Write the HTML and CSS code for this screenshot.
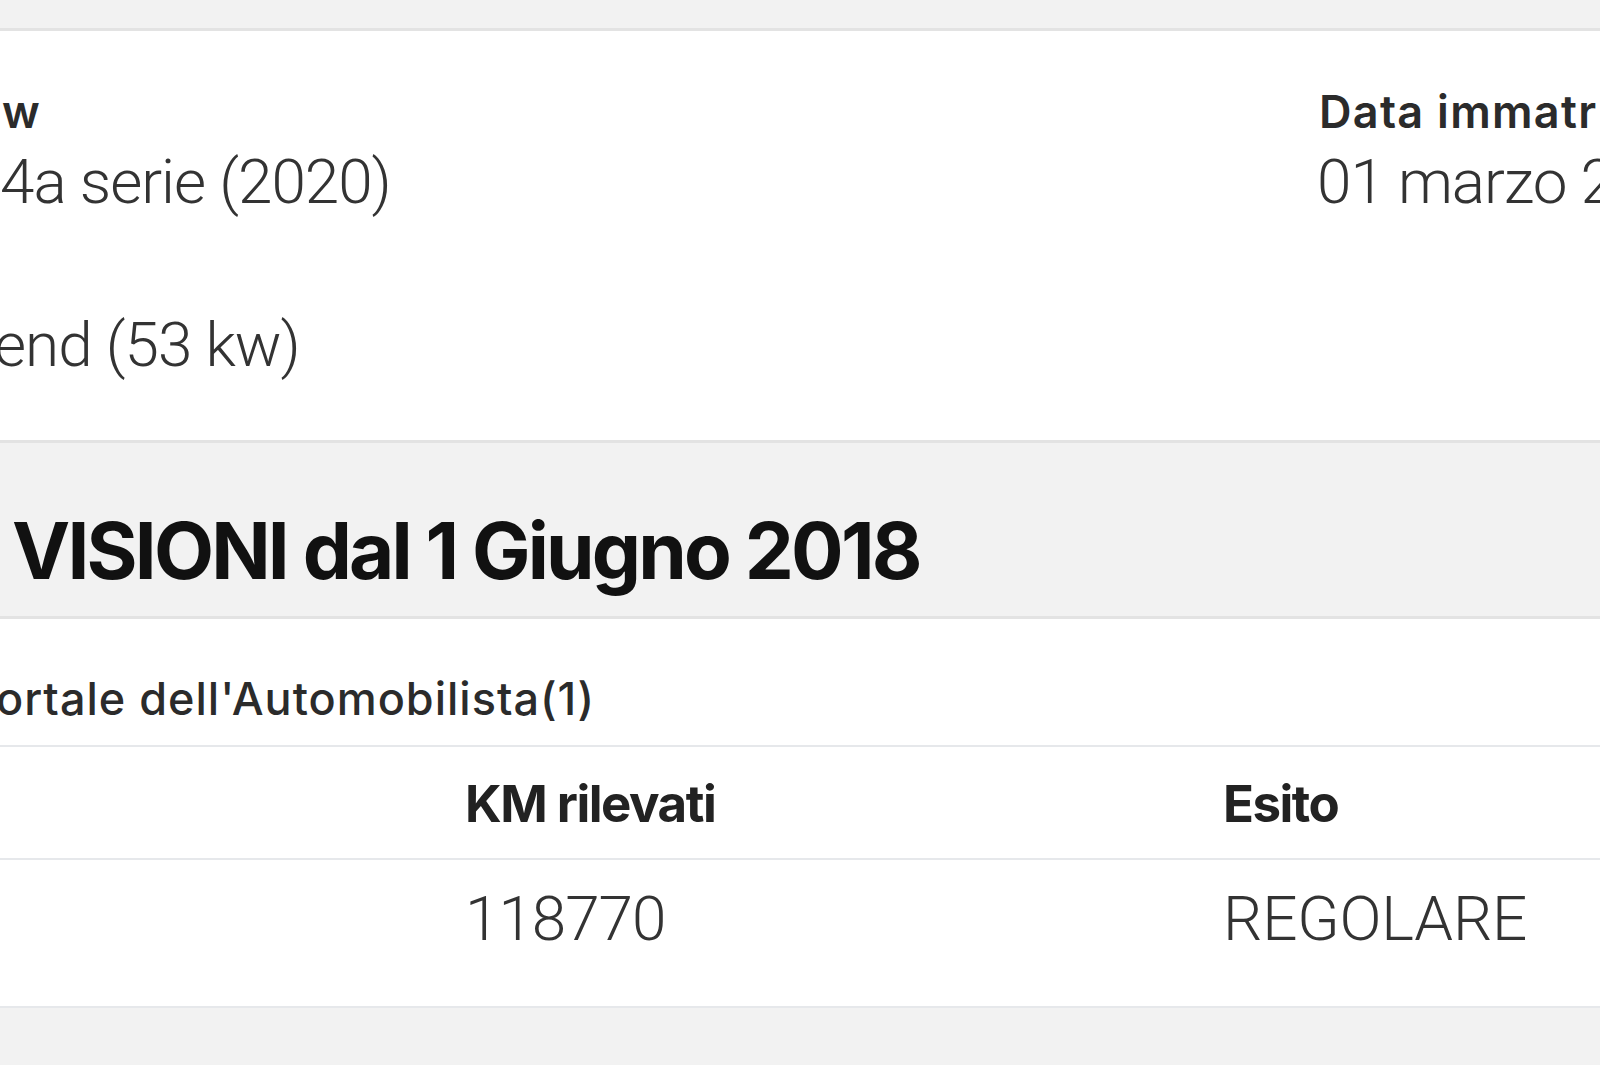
FILE: index.html
```html
<!DOCTYPE html>
<html lang="it">
<head>
  <meta charset="UTF-8">
  <meta name="viewport" content="width=device-width, initial-scale=1.0">
  <title>Dati veicolo</title>
  <link rel="stylesheet" href="styles.css">
</head>
<body>
  <div class="top-strip"></div>

  <section class="card specs">
    <div class="spec-grid">
      <div class="spec">
        <div class="spec-label">w</div>
        <div class="spec-value">4a serie (2020)</div>
      </div>
      <div class="spec">
        <div class="spec-label">Data immatr</div>
        <div class="spec-value">01 marzo 2</div>
      </div>
      <div class="spec">
        <div class="spec-label"></div>
        <div class="spec-value cut">end (53 kw)</div>
      </div>
      <div class="spec"></div>
    </div>
  </section>

  <section class="band">
    <h2>VISIONI dal 1 Giugno 2018</h2>
  </section>

  <section class="card revisioni">
    <div class="source">ortale dell'Automobilista(1)</div>
    <div class="trow thead">
      <div class="cell"></div>
      <div class="cell">KM rilevati</div>
      <div class="cell">Esito</div>
    </div>
    <div class="trow">
      <div class="cell"></div>
      <div class="cell">118770</div>
      <div class="cell">REGOLARE</div>
    </div>
  </section>
</body>
</html>
```

FILE: styles.css
```css
html, body { margin: 0; padding: 0; }
body { background-color: #f2f2f2; color: #333; font-family: Inter, "Noto Sans", sans-serif; overflow: hidden; width: 1600px; height: 1065px; white-space: nowrap; }

.top-strip { height: 28px; }
.card { background-color: #fff; border-top: 3px solid #e3e3e3; border-bottom: 3px solid #e3e3e3; }

/* dati veicolo */
.specs { padding: 54px 0 58px; }
.spec-grid { display: grid; grid-template-columns: 1317px 1fr; row-gap: 29px; padding-left: 0; overflow: hidden; }
.spec-label { height: 54px; margin-bottom: 6px; font-size: 45px; line-height: 54px; font-weight: 600; letter-spacing: 1.3px; color: #2b2b2b; padding-left: 2px; }
.spec-value { height: 74px; font-family: Roboto, "Liberation Sans", sans-serif; font-weight: 300; font-size: 62px; line-height: 74px; letter-spacing: -1px; color: #333; }
.spec-value.cut { text-indent: -6px; }

/* titolo sezione */
.band { border-top: none; padding: 60px 0 17px 12px; }
.band h2 { margin: 0; font-size: 78px; line-height: 96px; font-weight: 700; letter-spacing: -2.8px; color: #111; }

/* revisioni */
.revisioni { border-top-width: 3px; border-bottom-width: 2px; border-bottom-color: #e6e8eb; }
.source { padding: 53px 0 19px 0; text-indent: -4px; font-size: 45px; line-height: 54px; font-weight: 500; letter-spacing: 1px; color: #2b2b2b; border-bottom: 2px solid #e6e8eb; }
.trow { display: grid; grid-template-columns: 465px 758px 1fr; }
.thead { padding: 27px 0 24px; border-bottom: 2px solid #e6e8eb; }
.thead .cell { font-size: 51px; line-height: 60px; font-weight: 700; color: #222; letter-spacing: -1.5px; }
.trow:not(.thead) { padding: 22px 0 50px; }
.trow:not(.thead) .cell { font-family: Roboto, "Liberation Sans", sans-serif; font-weight: 300; font-size: 62px; line-height: 74px; letter-spacing: -1px; color: #333; }
.trow:not(.thead) .cell:last-child { letter-spacing: -0.2px; }
```
